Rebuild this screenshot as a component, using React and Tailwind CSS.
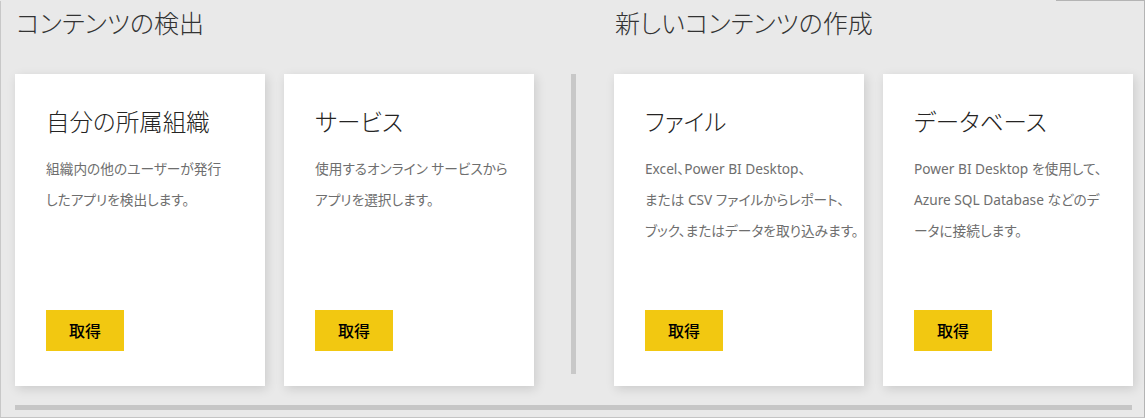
const font = { fontFamily: '"Noto Sans", "Noto Sans CJK JP", sans-serif' };

const discover = [
  {
    title: "自分の所属組織",
    lines: ["組織内の他のユーザーが発行", "したアプリを検出します。"],
  },
  {
    title: "サービス",
    lines: ["使用するオンライン サービスから", "アプリを選択します。"],
  },
];

const create = [
  {
    title: "ファイル",
    lines: [
      "Excel、Power BI Desktop、",
      "または CSV ファイルからレポート、",
      "ブック、またはデータを取り込みます。",
    ],
  },
  {
    title: "データベース",
    lines: [
      "Power BI Desktop を使用して、",
      "Azure SQL Database などのデ",
      "ータに接続します。",
    ],
  },
];

const Card = ({ title, lines }) => (
  <div className="flex h-[312px] w-[250px] flex-col bg-white pb-[35px] pl-[31px] pt-[31px] shadow-[2px_3px_10px_rgba(0,0,0,0.13)]">
    <h3 className="text-[23.5px] font-light leading-[34px] text-[#252423] [font-feature-settings:'palt']">{title}</h3>
    <p className="mt-[14px] whitespace-nowrap text-[13.7px] leading-[31px] text-[#6e6e6e] [font-feature-settings:'palt']">
      {lines.map((l, i) => (
        <span key={i} className="block">
          {l}
        </span>
      ))}
    </p>
    <button className="mt-auto h-[41px] w-[78px] bg-[#f2c811] text-[16px] font-medium text-black">取得</button>
  </div>
);

const Section = ({ heading, cards }) => (
  <div className="flex flex-col">
    <h2 className="h-[74px] pl-[1px] pt-[3px] text-[25px] font-light leading-[40px] text-[#333333] [font-feature-settings:'palt']">
      {heading}
    </h2>
    <div className="flex gap-[19px]">
      {cards.map((c) => (
        <Card key={c.title} {...c} />
      ))}
    </div>
  </div>
);

export default function App() {
  return (
    <div style={font} className="h-[418px] w-[1145px] bg-[#e9e9e9]">
      <div className="flex h-[1px]">
        <div className="w-[1056px]" />
        <div className="flex-1 bg-[#b4b4b4]" />
      </div>
      <div className="flex h-[417px] flex-col border-b border-l border-r border-b-[#c4c4c4] border-l-[#c8c8c8] border-r-[#b4b4b4] pl-[14px]">
        <div className="-mt-[1px] flex">
          <Section heading="コンテンツの検出" cards={discover} />
          <div className="ml-[37px] mr-[38px] mt-[74px] h-[300px] w-[5px] bg-[#c8c8c8]" />
          <Section heading="新しいコンテンツの作成" cards={create} />
        </div>
        <div className="mt-[19px] h-[5px] w-[1117px] bg-[#c6c6c6]" />
      </div>
    </div>
  );
}
